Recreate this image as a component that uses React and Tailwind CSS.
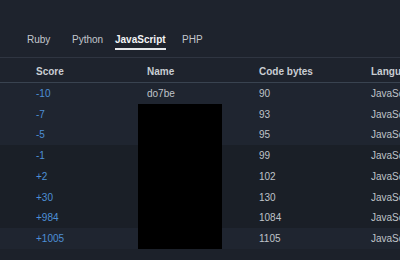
import React from 'react'

const rows = [
    { score: '-10', name: 'do7be', bytes: '90', alt: true },
    { score: '-7', name: '', bytes: '93', alt: true },
    { score: '-5', name: '', bytes: '95', alt: true },
    { score: '-1', name: '', bytes: '99', alt: false },
    { score: '+2', name: '', bytes: '102', alt: false },
    { score: '+30', name: '', bytes: '130', alt: false },
    { score: '+984', name: '', bytes: '1084', alt: false },
    { score: '+1005', name: '', bytes: '1105', alt: true },
]

const tabs = [
    { label: 'Ruby', w: 'w-[45px]' },
    { label: 'Python', w: 'w-[43px]' },
    { label: 'JavaScript', w: 'w-[67px]', active: true },
    { label: 'PHP', w: 'w-[40px]' },
]

const App = () => {
    return (
        <div className="w-[400px] h-[260px] overflow-hidden bg-[#1c212a] text-[10px] font-['Liberation_Sans',Arial,sans-serif]">
            {/* Language tabs */}
            <div className="h-[58px] bg-[#1e232d] border-b border-[#2f3541] flex items-end pb-[7px] pl-[27px]">
                {tabs.map((t) => (
                    <div key={t.label} className={`${t.w} shrink-0`}>
                        <span
                            className={`inline-block leading-[14px] pb-[1px] border-b-2 ${
                                t.active
                                    ? 'border-[#e6e8eb] text-[#f2f4f6] font-bold'
                                    : 'border-transparent text-[#c3c7cd]'
                            }`}
                        >
                            {t.label}
                        </span>
                    </div>
                ))}
            </div>

            {/* Table header */}
            <div className="h-[25px] bg-[#1e232d] border-b border-[#394350] grid grid-cols-[111px_112px_112px_1fr] pl-6 items-end pb-[3px] font-bold text-[#c9cdd3] leading-[14px] whitespace-nowrap">
                <div className="pl-3">Score</div>
                <div className="pl-3">Name</div>
                <div className="pl-3">Code bytes</div>
                <div className="pl-3">Language</div>
            </div>

            {/* Rows */}
            <div className="relative">
                {rows.map((r) => (
                    <div
                        key={r.score}
                        className={`h-[20.75px] grid grid-cols-[111px_112px_112px_1fr] pl-6 items-center whitespace-nowrap ${
                            r.alt ? 'bg-[#1f2530]' : 'bg-[#1a1f27]'
                        }`}
                    >
                        <div className="pl-3 text-[#4d8fd6]">{r.score}</div>
                        <div className="pl-3 text-[#bfc3c9]">{r.name}</div>
                        <div className="pl-3 text-[#bfc3c9]">{r.bytes}</div>
                        <div className="pl-3 text-[#bfc3c9]">JavaScript</div>
                    </div>
                ))}
                {/* redaction */}
                <div className="absolute left-[138px] top-[21px] w-[84px] h-[145px] bg-black"></div>
            </div>
        </div>
    )
}

export default App
